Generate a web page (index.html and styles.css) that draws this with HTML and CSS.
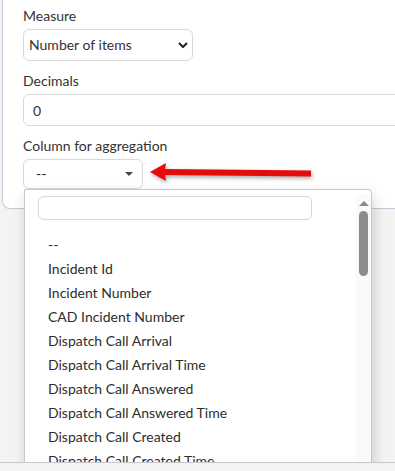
FILE: index.html
```html
<!DOCTYPE html>
<html lang="en">
<head>
    <meta charset="UTF-8">
    <meta name="viewport" content="width=device-width, initial-scale=1.0">
    <title>Widget settings</title>
    <link rel="stylesheet" href="styles.css">
</head>
<body>
    <div class="card">
        <div class="field">
            <label for="measure">Measure</label>
            <select id="measure" class="select">
                <option>Number of items</option>
                <option>Sum</option>
                <option>Average</option>
            </select>
        </div>

        <div class="field">
            <label for="decimals">Decimals</label>
            <input type="text" id="decimals" class="input" value="0">
        </div>

        <div class="field last">
            <label>Column for aggregation</label>
            <div class="s2">
                <div class="s2-box">
                    <span>--</span>
                    <span class="s2-caret"></span>
                </div>

                <!-- open dropdown -->
                <div class="s2-drop">
                    <div class="s2-main">
                        <input type="text" class="s2-search">
                        <ul class="s2-results">
                            <li>--</li>
                            <li>Incident Id</li>
                            <li>Incident Number</li>
                            <li>CAD Incident Number</li>
                            <li>Dispatch Call Arrival</li>
                            <li>Dispatch Call Arrival Time</li>
                            <li>Dispatch Call Answered</li>
                            <li>Dispatch Call Answered Time</li>
                            <li>Dispatch Call Created</li>
                            <li>Dispatch Call Created Time</li>
                            <li>Dispatch Call Closed</li>
                        </ul>
                    </div>
                    <div class="s2-scroll">
                        <span class="s2-up"></span>
                        <span class="s2-thumb"></span>
                    </div>
                </div>
            </div>
        </div>
    </div>

    <!-- annotation arrow -->
    <svg class="annot" width="175" height="32" viewBox="0 0 175 32">
        <polygon points="5,14 21,5 20,11 166,12.5 166,18.5 20,17 21,23" fill="#e60b0b"/>
    </svg>

    <div class="footer"></div>
</body>
</html>
```

FILE: styles.css
```css
html, body {
    height: 100%;
}
body {
    margin: 0;
    overflow: hidden;
    position: relative;
    font-family: Lato, "Open Sans", sans-serif;
    font-size: 14px;
    line-height: 20px;
    color: #333;
    background-color: #f3f3f3;
}
.card {
    margin-left: 2px;
    margin-right: -40px;
    padding: 6px 20px 19px 20px;
    background: #fff;
    border: 1px solid #c3c8d6;
    border-top: none;
    border-right: none;
    border-radius: 0 0 0 8px;
}
.field {
    margin-bottom: 10px;
}
.field.last {
    margin-bottom: 0;
}
label {
    display: block;
    margin-bottom: 3px;
}
.select {
    display: block;
    box-sizing: border-box;
    width: 170px;
    height: 32px;
    padding: 0 20px 0 5px;
    font: inherit;
    color: #333;
    background: #fff url("data:image/svg+xml,%3Csvg xmlns='http://www.w3.org/2000/svg' width='10' height='6' viewBox='0 0 10 6'%3E%3Cpath d='M1 1l4 4 4-4' fill='none' stroke='%23222' stroke-width='2'/%3E%3C/svg%3E") no-repeat right 4px center;
    border: 1px solid #d9d9d9;
    border-radius: 6px;
    -webkit-appearance: none;
    appearance: none;
}
.input {
    display: block;
    box-sizing: border-box;
    width: 420px;
    height: 32px;
    padding: 0 9px;
    font: inherit;
    color: #333;
    border: 1px solid #d9d9d9;
    border-radius: 6px;
    outline: none;
}
.s2 {
    position: relative;
    width: 120px;
}
.s2-box {
    box-sizing: border-box;
    height: 30px;
    display: flex;
    align-items: center;
    justify-content: space-between;
    padding: 0 9px 0 12px;
    border: 1px solid #d9d9d9;
    border-radius: 6px;
    color: #222;
}
.s2-caret {
    width: 0;
    height: 0;
    border-left: 4px solid transparent;
    border-right: 4px solid transparent;
    border-top: 4px solid #444;
}
.s2-drop {
    position: absolute;
    top: 30px;
    left: 1px;
    z-index: 5;
    width: 348px;
    height: 290px;
    box-sizing: border-box;
    display: flex;
    background: #fff;
    border: 1px solid #c8c8c8;
    border-radius: 0 4px 0 0;
    box-shadow: 2px 6px 14px rgba(0, 0, 0, 0.16);
}
.s2-main {
    flex: 1;
    padding: 6px 0 0 13px;
}
.s2-search {
    display: block;
    box-sizing: border-box;
    width: 274px;
    height: 24px;
    border: 1px solid #d6d6d6;
    border-radius: 6px;
    outline: none;
}
.s2-results {
    list-style: none;
    margin: 13px 0 0 0;
    padding: 0 0 0 10px;
}
.s2-results li {
    padding: 2px 0;
    color: #2d2d2d;
}
.s2-scroll {
    width: 15px;
    margin-top: 4px;
    padding-top: 7px;
    display: flex;
    flex-direction: column;
    align-items: center;
    background: #fafafa;
}
.s2-up {
    width: 0;
    height: 0;
    border-left: 5px solid transparent;
    border-right: 5px solid transparent;
    border-bottom: 5px solid #8a8a8a;
}
.s2-thumb {
    width: 9px;
    height: 65px;
    margin-top: 5px;
    border-radius: 5px;
    background: #8c8c8c;
}
.annot {
    position: absolute;
    left: 145px;
    top: 158px;
    z-index: 6;
    filter: drop-shadow(1px 2px 2px rgba(0, 0, 0, 0.35));
}
.footer {
    position: absolute;
    left: 0;
    right: 0;
    bottom: 0;
    z-index: 10;
    height: 8px;
    background: #f3f3f3;
    border-top: 1px solid #c6c6d0;
}
```
